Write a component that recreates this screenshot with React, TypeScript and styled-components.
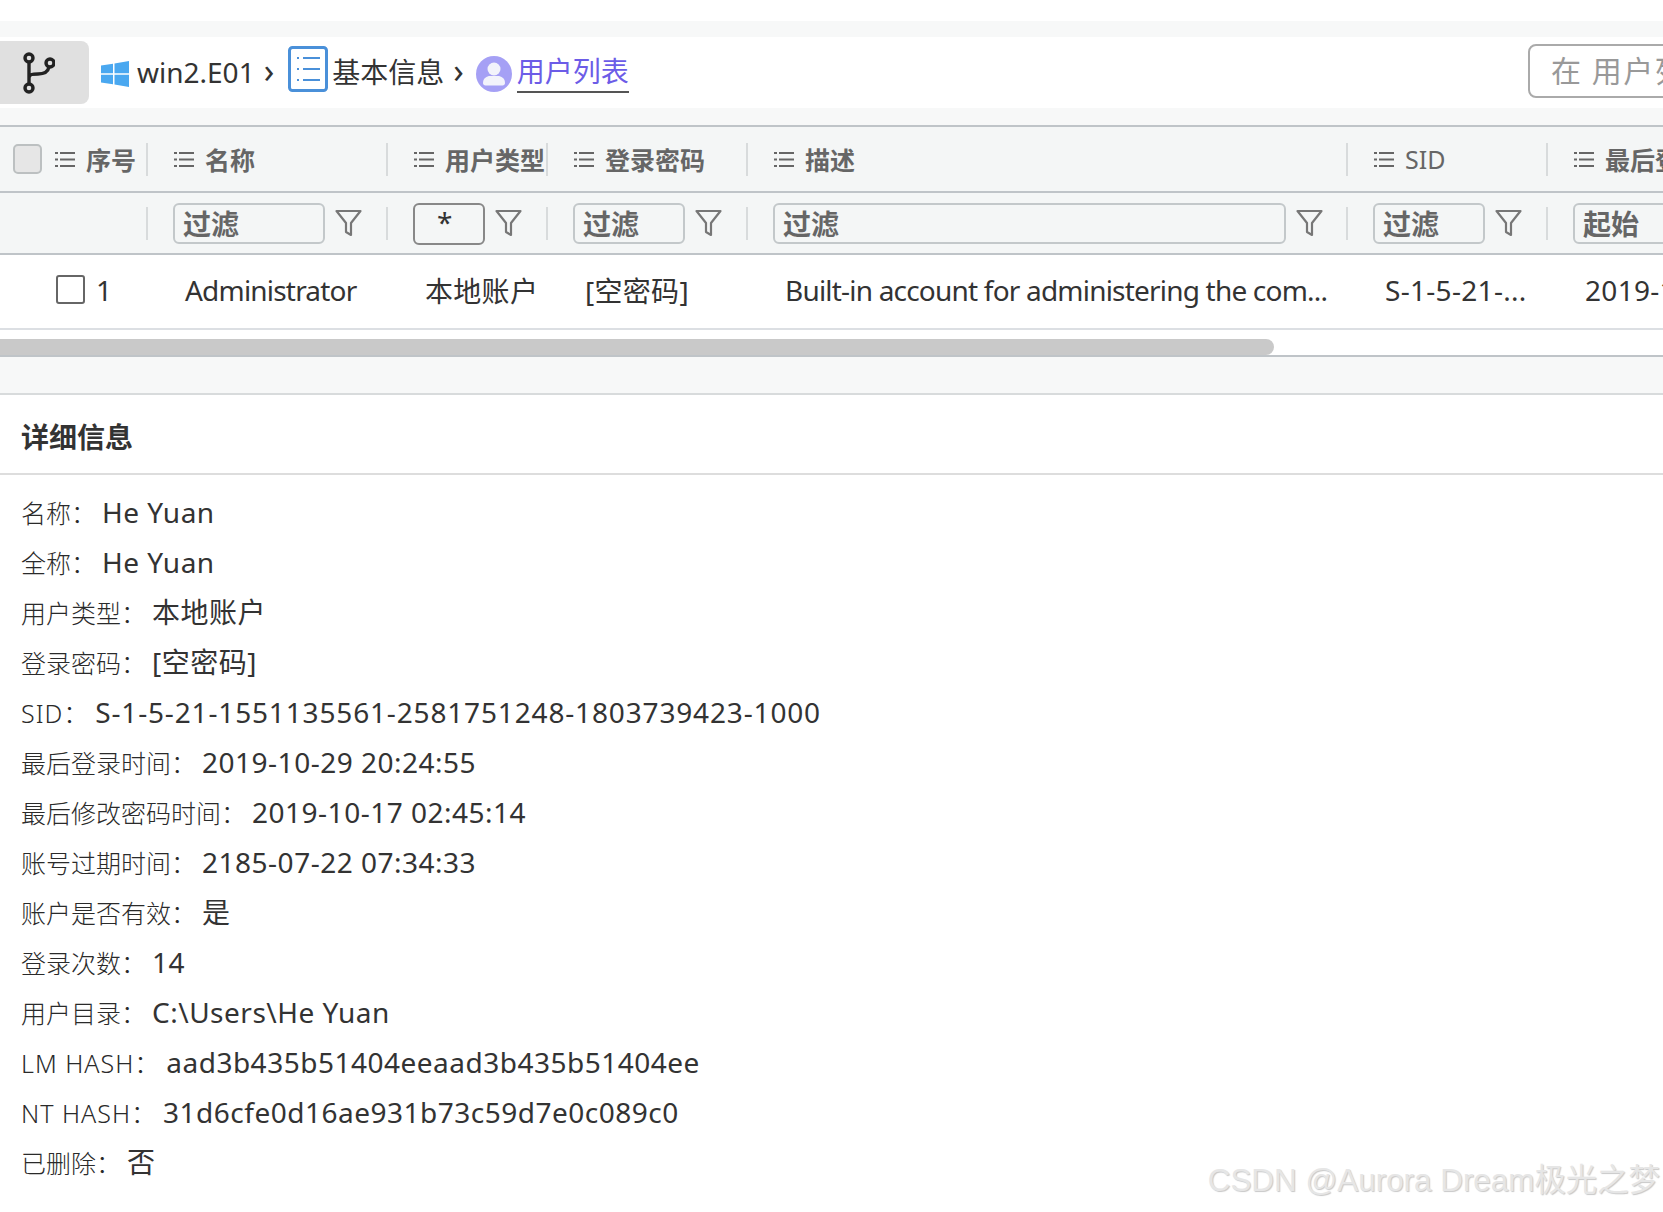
import React from "react";
import styled, { createGlobalStyle } from "styled-components";

const GlobalStyle = createGlobalStyle`
    html, body {
        margin: 0;
        background: #fff;
        overflow: hidden;
    }
    body {
        font-family: "Noto Sans", "Noto Sans CJK SC", sans-serif;
        color: #222;
    }
`;

const COLUMNS = "148px 240px 160px 200px 600px 200px 200px";

const HEAD = [
    { title: "序号" },
    { title: "名称" },
    { title: "用户类型" },
    { title: "登录密码" },
    { title: "描述" },
    { title: "SID", light: true },
    { title: "最后登录时间" },
];

const FILTERS = [
    { text: "过滤", width: 152 },
    { text: "*", width: 72, strong: true },
    { text: "过滤", width: 112 },
    { text: "过滤", width: 513 },
    { text: "过滤", width: 112 },
    { text: "起始", width: 152 },
];

const ROW = [
    { text: "Administrator", tight: true },
    { text: "本地账户" },
    { text: "[空密码]" },
    { text: "Built-in account for administering the com...", tight: true },
    { text: "S-1-5-21-..." },
    { text: "2019-10-29 20:24:55" },
];

const DETAILS = [
    { label: "名称", value: "He Yuan" },
    { label: "全称", value: "He Yuan" },
    { label: "用户类型", value: "本地账户" },
    { label: "登录密码", value: "[空密码]" },
    { label: "SID", value: "S-1-5-21-1551135561-2581751248-1803739423-1000", wide: true },
    { label: "最后登录时间", value: "2019-10-29 20:24:55" },
    { label: "最后修改密码时间", value: "2019-10-17 02:45:14" },
    { label: "账号过期时间", value: "2185-07-22 07:34:33" },
    { label: "账户是否有效", value: "是" },
    { label: "登录次数", value: "14" },
    { label: "用户目录", value: "C:\\Users\\He Yuan" },
    { label: "LM HASH", value: "aad3b435b51404eeaad3b435b51404ee" },
    { label: "NT HASH", value: "31d6cfe0d16ae931b73c59d7e0c089c0" },
    { label: "已删除", value: "否" },
];

const ListIcon = () => (
    <IconSvg width="20" height="17" viewBox="0 0 20 17" fill="none" stroke="#666" strokeWidth="2.200">
        <path d="M0 2h3M5 2h15M0 8.500h3M5 8.500h15M0 15h3M5 15h15" />
    </IconSvg>
);

const FilterIcon = () => (
    <IconSvg width="27" height="28" viewBox="0 0 27 28" fill="none" stroke="#777" strokeWidth="2.200" strokeLinejoin="round">
        <path d="M1.500 2H25.500L16 14V26L11 23V14Z" />
    </IconSvg>
);

const BranchIcon = () => (
    <svg width="34" height="42" viewBox="0 0 34 42" fill="none" stroke="#222" strokeWidth="3.400">
        <circle cx="8" cy="6" r="4" />
        <circle cx="8" cy="36" r="4" />
        <circle cx="29" cy="11" r="4" />
        <path d="M8 10V32M8 26C8 22 12 22 17 22C23 22 27 20 28 15" />
    </svg>
);

const WindowsIcon = () => (
    <svg width="28" height="26" viewBox="0 0 28 26" fill="#4aa8f0">
        <path d="M0 4.500L12 2.800V12.300H0ZM13.500 2.600L28 0V12.300H13.500ZM0 13.800H12V23.200L0 21.500ZM13.500 13.800H28V26L13.500 23.400Z" />
    </svg>
);

const InfoIcon = () => (
    <svg width="40" height="46" viewBox="0 0 40 46" fill="none" stroke="#4a90d9">
        <rect x="1.500" y="1.500" width="37" height="43" rx="3" strokeWidth="3" />
        <path d="M9 12h2M15 12h17M9 23h2M15 23h17M9 34h2M15 34h17" strokeWidth="2" />
    </svg>
);

const UserIcon = () => (
    <svg width="36" height="36" viewBox="0 0 36 36">
        <circle cx="18" cy="18" r="18" fill="#a5a0f5" />
        <circle cx="18" cy="13" r="6.500" fill="#f2f3fb" />
        <path d="M7 27c0-5 4-7 7-7h8c3 0 7 2 7 7 0 1.500-1 2.500-2.500 2.500h-17C8 29.500 7 28.500 7 27Z" fill="#f2f3fb" />
    </svg>
);

export default function App() {
    return (
        <Page>
            <GlobalStyle />
            <TopBand />
            <Toolbar>
                <BranchButton>
                    <BranchIcon />
                </BranchButton>
                <Crumb $left={12} $top={2}>
                    <WindowsIcon />
                </Crumb>
                <CrumbText $gap={8}>win2.E01</CrumbText>
                <Chevron $left={9}>›</Chevron>
                <Crumb $left={14} $top={-8}>
                    <InfoIcon />
                </Crumb>
                <CrumbText $gap={4}>基本信息</CrumbText>
                <Chevron $left={9}>›</Chevron>
                <Crumb $left={12} $top={3}>
                    <UserIcon />
                </Crumb>
                <ActiveCrumb>用户列表</ActiveCrumb>
                <SearchBox>在 用户列表中搜索</SearchBox>
            </Toolbar>
            <Band />
            <Table>
                <HeadRow>
                    {HEAD.map((col, i) => (
                        <HeadCell key={col.title} $first={i === 0}>
                            {i === 0 && <HeadCheck />}
                            <ListIcon />
                            <HeadTitle $light={col.light}>{col.title}</HeadTitle>
                            {i < HEAD.length - 1 && <Divider />}
                        </HeadCell>
                    ))}
                </HeadRow>
                <FilterRow>
                    <FilterCell>
                        <Divider />
                    </FilterCell>
                    {FILTERS.map((f, i) => (
                        <FilterCell key={i} $pad>
                            <FilterInput $width={f.width} $strong={f.strong}>
                                {f.text}
                            </FilterInput>
                            <FilterIcon />
                            {i < FILTERS.length - 1 && <Divider />}
                        </FilterCell>
                    ))}
                </FilterRow>
                <DataRow>
                    <SeqCell>
                        <RowCheck />
                        <span>1</span>
                    </SeqCell>
                    {ROW.map((cell) => (
                        <DataCell key={cell.text} $tight={cell.tight}>
                            {cell.text}
                        </DataCell>
                    ))}
                </DataRow>
                <ScrollTrack>
                    <ScrollThumb />
                </ScrollTrack>
                <FootStrip />
            </Table>
            <DetailTitle>详细信息</DetailTitle>
            <DetailList>
                {DETAILS.map((row) => (
                    <DetailRow key={row.label}>
                        <DetailLabel $latin={/^[A-Z ]+$/.test(row.label)}>{row.label}：</DetailLabel>
                        <DetailValue $wide={row.wide}>{row.value}</DetailValue>
                    </DetailRow>
                ))}
            </DetailList>
            <Watermark>CSDN @Aurora Dream极光之梦</Watermark>
        </Page>
    );
}

const Page = styled.div`
    position: relative;
    width: 1663px;
    height: 1212px;
    overflow: hidden;
    background: #fff;
`;

const TopBand = styled.div`
    height: 16px;
    margin-top: 21px;
    background: #f7f8f8;
`;

const Band = styled.div`
    height: 17px;
    background: #f7f8f8;
`;

const Toolbar = styled.div`
    display: flex;
    align-items: center;
    height: 71px;
    background: #fff;
    white-space: nowrap;
    overflow: hidden;
`;

const BranchButton = styled.div`
    display: flex;
    align-items: center;
    justify-content: center;
    width: 89px;
    height: 63px;
    padding-right: 13px;
    box-sizing: border-box;
    flex: none;
    background: #e0e0e0;
    border-radius: 0 8px 8px 0;
`;

const Crumb = styled.div<{ $left: number; $top: number }>`
    display: flex;
    align-items: center;
    margin-left: ${(p) => p.$left}px;
    margin-top: ${(p) => p.$top}px;
`;

const CrumbText = styled.span<{ $gap: number }>`
    margin-left: ${(p) => p.$gap}px;
    margin-top: -2px;
    font-size: 28px;
    line-height: 40px;
    color: #333;
`;

const Chevron = styled.span<{ $left: number }>`
    margin-left: ${(p) => p.$left}px;
    font-size: 34px;
    line-height: 40px;
    color: #333;
    margin-top: -6px;
`;

const ActiveCrumb = styled.span`
    margin-left: 5px;
    margin-top: -2px;
    font-size: 28px;
    line-height: 40px;
    color: #6c5ce7;
    border-bottom: 2px solid #555;
`;

const SearchBox = styled.div`
    flex: none;
    width: 300px;
    height: 54px;
    margin-left: auto;
    margin-right: -165px;
    margin-top: -3px;
    padding-left: 21px;
    box-sizing: border-box;
    border: 2px solid #aaa;
    border-radius: 8px;
    font-size: 30px;
    line-height: 50px;
    color: #999;
    letter-spacing: 1.500px;
`;

const Table = styled.div`
    border-top: 2px solid #bfc4c8;
`;

const HeadRow = styled.div`
    display: grid;
    grid-template-columns: ${COLUMNS};
    height: 64px;
    background: #f4f6f6;
    border-bottom: 2px solid #bfc4c8;
`;

const HeadCell = styled.div<{ $first?: boolean }>`
    position: relative;
    display: flex;
    align-items: center;
    gap: 11px;
    padding-left: ${(p) => (p.$first ? 13 : 26)}px;
    overflow: hidden;
    white-space: nowrap;
`;

const HeadCheck = styled.span`
    flex: none;
    width: 29px;
    height: 30px;
    margin-right: 2px;
    box-sizing: border-box;
    background: #e6e6e6;
    border: 2px solid #bcc0c1;
    border-radius: 5px;
`;

const HeadTitle = styled.span<{ $light?: boolean }>`
    font-size: 25px;
    font-weight: ${(p) => (p.$light ? 400 : 700)};
    color: #666;
`;

const IconSvg = styled.svg`
    flex: none;
`;

const Divider = styled.span`
    position: absolute;
    right: 0;
    top: 50%;
    width: 2px;
    height: 33px;
    margin-top: -16px;
    background: #d8dbdc;
`;

const FilterRow = styled.div`
    display: grid;
    grid-template-columns: ${COLUMNS};
    height: 60px;
    background: #f4f6f6;
    border-bottom: 2px solid #bfc4c8;
`;

const FilterCell = styled.div<{ $pad?: boolean }>`
    position: relative;
    display: flex;
    align-items: center;
    gap: 10px;
    padding-left: ${(p) => (p.$pad ? 25 : 0)}px;
    overflow: hidden;
`;

const FilterInput = styled.div<{ $width: number; $strong?: boolean }>`
    flex: none;
    width: ${(p) => p.$width}px;
    height: ${(p) => (p.$strong ? 42 : 41)}px;
    margin-top: 1px;
    padding-left: ${(p) => (p.$strong ? 22 : 8)}px;
    box-sizing: border-box;
    border: 2px solid ${(p) => (p.$strong ? "#888" : "#c3c8ca")};
    border-radius: 6px;
    font-size: 28px;
    line-height: ${(p) => (p.$strong ? 35 : 39)}px;
    font-weight: ${(p) => (p.$strong ? 400 : 700)};
    color: ${(p) => (p.$strong ? "#333" : "#666")};
`;

const DataRow = styled.div`
    display: grid;
    grid-template-columns: ${COLUMNS};
    align-items: center;
    height: 69px;
    padding-bottom: 4px;
    border-bottom: 2px solid #dcdfe3;
    font-size: 28px;
`;

const SeqCell = styled.div`
    display: flex;
    align-items: center;
    gap: 11px;
    padding-left: 56px;
    color: #333;
`;

const RowCheck = styled.span`
    flex: none;
    width: 29px;
    height: 29px;
    box-sizing: border-box;
    border: 2px solid #666;
    border-radius: 3px;
`;

const DataCell = styled.div<{ $tight?: boolean }>`
    padding-left: 37px;
    white-space: nowrap;
    overflow: hidden;
    color: #333;
    letter-spacing: ${(p) => (p.$tight ? -0.8 : 0.3)}px;
`;

const ScrollTrack = styled.div`
    padding-top: 9px;
    height: 16px;
    border-bottom: 2px solid #bfc4c8;
`;

const ScrollThumb = styled.div`
    width: 1274px;
    height: 16px;
    background: #c9c9c9;
    border-radius: 0 8px 8px 0;
`;

const FootStrip = styled.div`
    height: 36px;
    background: #f7f8f8;
    border-bottom: 2px solid #d8dbdc;
`;

const DetailTitle = styled.div`
    height: 72px;
    padding: 6px 0 0 21px;
    border-bottom: 2px solid #ddd;
    font-size: 28px;
    font-weight: 700;
    line-height: 72px;
    color: #333;
`;

const DetailList = styled.div`
    display: flex;
    flex-direction: column;
    padding: 12px 0 0 21px;
`;

const DetailRow = styled.div`
    display: flex;
    align-items: baseline;
    height: 50px;
    line-height: 50px;
    gap: 6px;
    white-space: nowrap;
`;

const DetailLabel = styled.span<{ $latin?: boolean }>`
    font-size: 25px;
    color: #2a2a2a;
    font-weight: 300;
    letter-spacing: ${(p) => (p.$latin ? 1 : 0)}px;
`;

const DetailValue = styled.span<{ $wide?: boolean }>`
    font-size: 28px;
    color: #333;
    letter-spacing: ${(p) => (p.$wide ? 0.84 : 0.5)}px;
`;

const Watermark = styled.div`
    position: absolute;
    right: 3px;
    top: 1160px;
    font-family: "Liberation Sans", "Noto Sans CJK SC", sans-serif;
    font-size: 31.400px;
    line-height: 42px;
    color: #e6e6e6;
    text-shadow: 1px 1px 1px #c8c8c8;
    white-space: nowrap;
`;
